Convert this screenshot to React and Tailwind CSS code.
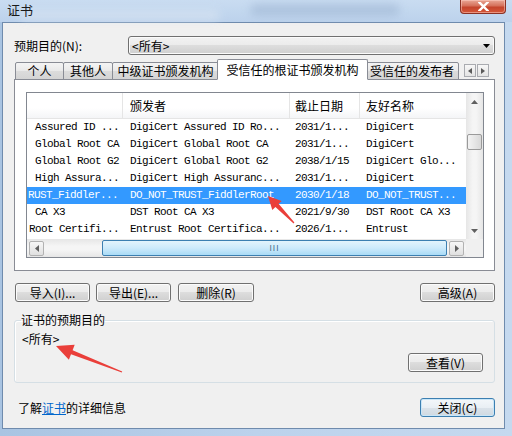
import React from "react"

const rows = [
  { c1: "Assured ID ...", pad: "pl-[8px]", c2: "DigiCert Assured ID Ro...", c3: "2031/1...", c4: "DigiCert" },
  { c1: "Global Root CA", pad: "pl-[8px]", c2: "DigiCert Global Root CA", c3: "2031/1...", c4: "DigiCert" },
  { c1: "Global Root G2", pad: "pl-[8px]", c2: "DigiCert Global Root G2", c3: "2038/1/15", c4: "DigiCert Glo..." },
  { c1: "High Assura...", pad: "pl-[8px]", c2: "DigiCert High Assuranc...", c3: "2031/1...", c4: "DigiCert" },
  { c1: "RUST_Fiddler...", pad: "pl-[1px]", c2: "DO_NOT_TRUST_FiddlerRoot", c3: "2030/1/18", c4: "DO_NOT_TRUST...", sel: true },
  { c1: "CA X3", pad: "pl-[8px]", c2: "DST Root CA X3", c3: "2021/9/30", c4: "DST Root CA X3" },
  { c1: "Root Certifi...", pad: "pl-[2px]", c2: "Entrust Root Certifica...", c3: "2026/1...", c4: "Entrust" },
]

// tapered arrow from tail to tip
function arrowPoints(x1, y1, x2, y2, head, hw) {
  const dx = x2 - x1
  const dy = y2 - y1
  const len = Math.hypot(dx, dy)
  const ux = dx / len
  const uy = dy / len
  const nx = -uy
  const ny = ux
  const bx = x2 - ux * head
  const by = y2 - uy * head
  const pts = [
    [x1 + nx * 0.6, y1 + ny * 0.6],
    [bx + nx * 2.2, by + ny * 2.2],
    [bx + nx * hw, by + ny * hw],
    [x2, y2],
    [bx - nx * hw, by - ny * hw],
    [bx - nx * 2.2, by - ny * 2.2],
    [x1 - nx * 0.6, y1 - ny * 0.6],
  ]
  return pts.map((p) => p.map((v) => v.toFixed(1)).join(",")).join(" ")
}

function Btn({ children, focus, className = "" }) {
  return (
    <div
      className={`h-[19px] w-[75px] flex items-center justify-center rounded-[3px] border text-[12px] leading-none ${
        focus
          ? "border-[#3c7fb1] bg-[linear-gradient(#f3f7fa,#e9eff4_50%,#dbe3ea_50%,#d0d9e1)] shadow-[inset_0_0_0_1px_#c9e6f8]"
          : "border-[#707070] bg-[linear-gradient(#f2f2f2,#ebebeb_50%,#dddddd_50%,#cfcfcf)] shadow-[inset_0_0_0_1px_#fbfbfb]"
      } ${className}`}
    >
      {children}
    </div>
  )
}

function Tab({ children, w, active }) {
  return (
    <div
      className={`${w} shrink-0 flex items-center justify-center border border-[#898c95] text-[12px] leading-none whitespace-nowrap ${
        active
          ? "h-[21px] -mx-[2px] z-10 border-b-white bg-white rounded-t-[2px]"
          : "h-[18px] -ml-px first:ml-0 bg-[linear-gradient(#f4f4f4,#e9e9e9_50%,#dcdcdc_50%,#d4d4d4)] rounded-t-[2px]"
      }`}
    >
      {children}
    </div>
  )
}

function SmallArrow({ dir }) {
  return (
    <div className="w-[12px] h-[13px] border border-[#a9abb0] bg-[linear-gradient(#f7f7f7,#e4e4e4)] flex items-center justify-center">
      <svg width="4" height="6" viewBox="0 0 4 6">
        {dir === "l" ? <polygon points="4,0 0,3 4,6" fill="#5a5a5a" /> : <polygon points="0,0 4,3 0,6" fill="#5a5a5a" />}
      </svg>
    </div>
  )
}

export default function App() {
  const mono = "font-['Liberation_Mono',monospace] text-[11px] tracking-[-0.6px]"
  return (
    <div className="relative w-[512px] h-[436px] overflow-hidden bg-[linear-gradient(90deg,#a9c4e2,#bcd2ec_50%,#c5d9ef)] font-['Noto_Sans_CJK_SC',sans-serif] text-[12px] text-black">
      {/* title bar */}
      <div className="relative h-[22px] bg-[linear-gradient(#c9dcf1,#bcd2ec)]">
        <div className="absolute left-[250px] top-[4px] w-[150px] h-[12px] rounded-full bg-[#9fb6d3] opacity-60 blur-[4px]" />
        <div className="absolute left-[20px] top-[10px] w-[200px] h-[10px] rounded-full bg-[#d5e2f1] opacity-80 blur-[4px]" />
        <span className="absolute left-[7px] top-[0px] text-[13px] leading-[20px] text-[#1a1a1a]">证书</span>
        <div className="absolute left-[460px] top-0 w-[46px] h-[14px] rounded-b-[4px] border border-t-0 border-[#8b3225] bg-[linear-gradient(#e9a796,#d5705a_45%,#c4442c_55%,#d5583a)] flex items-center justify-center shadow-[inset_0_0_0_1px_rgba(255,210,200,0.5)]">
          <svg width="11" height="9" viewBox="0 0 11 9">
            <path d="M1.5 0.5 L9.5 8.5 M9.5 0.5 L1.5 8.5" stroke="#ffffff" strokeWidth="2.4" strokeLinecap="square" />
          </svg>
        </div>
      </div>

      {/* client */}
      <div className="ml-[2px] w-[503px] h-[407px] border border-[#6f8bad] bg-[#f0f0f0] pl-[11px] pr-[9px] flex flex-col">
        {/* purpose */}
        <div className="mt-[13px] h-[19px] flex items-center">
          <span className="w-[114px] text-[12px]">预期目的(N):</span>
          <div className="flex-1 h-[19px] rounded-[3px] border border-[#707070] bg-[linear-gradient(#f2f2f2,#ebebeb_50%,#dddddd_50%,#cfcfcf)] shadow-[inset_0_0_0_1px_#fbfbfb] flex items-center pl-[3px] pr-[4px]">
            <span className="flex-1">&lt;所有&gt;</span>
            <svg width="7" height="4" viewBox="0 0 7 4">
              <polygon points="0,0 7,0 3.5,4" fill="#000" />
            </svg>
          </div>
        </div>

        {/* tabs */}
        <div className="mt-[5px] h-[20px] flex items-end pl-px relative z-10 -mb-px">
          <Tab w="w-[49px]">个人</Tab>
          <Tab w="w-[50px]">其他人</Tab>
          <Tab w="w-[107px]">中级证书颁发机构</Tab>
          <Tab w="w-[151px]" active>受信任的根证书颁发机构</Tab>
          <Tab w="w-[94px]">受信任的发布者</Tab>
          <div className="ml-auto mr-[6px] mb-[3px] flex gap-[1px]">
            <SmallArrow dir="l" />
            <SmallArrow dir="r" />
          </div>
        </div>

        {/* tab panel */}
        <div className="h-[192px] border border-[#898c95] bg-white pl-[11px] pr-[10px] pt-[12px]">
          <div className="w-[458px] h-[166px] border border-[#828790] flex flex-col">
            <div className="flex h-[146px]">
              <div className="flex-1 flex flex-col overflow-hidden">
                {/* header */}
                <div className="h-[26px] shrink-0 flex bg-[linear-gradient(#ffffff,#ffffff_60%,#f4f5f7)] border-b border-[#e5e5e5]">
                  <div className="w-[96px] border-r border-[#e5e5e5]" />
                  <div className="w-[167px] border-r border-[#e5e5e5] pl-[7px] flex items-center">颁发者</div>
                  <div className="w-[70px] border-r border-[#e5e5e5] pl-[5px] flex items-center">截止日期</div>
                  <div className="flex-1 pl-[6px] flex items-center">友好名称</div>
                </div>
                {rows.map((r) => (
                  <div
                    key={r.c2}
                    className={`h-[17px] shrink-0 flex items-center whitespace-nowrap ${mono} ${r.sel ? "bg-[#3399ff] text-white" : ""}`}
                  >
                    <div className={`w-[96px] overflow-hidden ${r.pad}`}>{r.c1}</div>
                    <div className="w-[167px] overflow-hidden pl-[7px]">{r.c2}</div>
                    <div className="w-[70px] overflow-hidden pl-[5px]">{r.c3}</div>
                    <div className="flex-1 overflow-hidden pl-[6px]">{r.c4}</div>
                  </div>
                ))}
              </div>
              {/* vertical scrollbar */}
              <div className="w-[17px] flex flex-col bg-[linear-gradient(90deg,#e6e6e6,#f5f5f5_40%,#f5f5f5_60%,#e6e6e6)]">
                <div className="h-[17px] flex items-center justify-center">
                  <svg width="7" height="4" viewBox="0 0 7 4">
                    <polygon points="0,4 7,4 3.5,0" fill="#606060" />
                  </svg>
                </div>
                <div className="mt-[24px] mx-[1px] h-[16px] rounded-[2px] border border-[#9a9a9a] bg-[linear-gradient(90deg,#f3f3f3,#e6e6e6_50%,#d8d8d8)]" />
                <div className="flex-1" />
                <div className="h-[17px] flex items-center justify-center">
                  <svg width="7" height="4" viewBox="0 0 7 4">
                    <polygon points="0,0 7,0 3.5,4" fill="#606060" />
                  </svg>
                </div>
              </div>
            </div>
            {/* horizontal scrollbar */}
            <div className="h-[18px] flex bg-[linear-gradient(#e6e6e6,#f5f5f5_40%,#f5f5f5_60%,#e6e6e6)]">
              <div className="w-[439px] flex items-center">
                <div className="ml-[2px] w-[15px] h-[15px] rounded-[2px] border border-[#b2b2b2] bg-[linear-gradient(#f7f7f7,#e0e0e0)] flex items-center justify-center">
                  <svg width="4" height="7" viewBox="0 0 4 7">
                    <polygon points="4,0 0,3.5 4,7" fill="#606060" />
                  </svg>
                </div>
                <div className="ml-[58px] w-[345px] h-[16px] rounded-[2px] border border-[#3c7fb1] bg-[linear-gradient(#e3f4fc,#cdeafb_50%,#a9dbf6)] flex items-center justify-center">
                  <span className="text-[8px] leading-none tracking-[1px] text-[#3b5f80]">III</span>
                </div>
                <div className="ml-[2px] w-[15px] h-[15px] rounded-[2px] border border-[#b2b2b2] bg-[linear-gradient(#f7f7f7,#e0e0e0)] flex items-center justify-center">
                  <svg width="4" height="7" viewBox="0 0 4 7">
                    <polygon points="0,0 4,3.5 0,7" fill="#606060" />
                  </svg>
                </div>
              </div>
              <div className="flex-1 bg-[#f0f0f0]" />
            </div>
          </div>
        </div>

        {/* buttons */}
        <div className="mt-[12px] flex items-center pl-px">
          <Btn>导入(I)...</Btn>
          <Btn className="ml-[6px]">导出(E)...</Btn>
          <Btn className="ml-[7px] w-[76px]">删除(R)</Btn>
          <div className="flex-1" />
          <Btn>高级(A)</Btn>
        </div>

        {/* group box */}
        <fieldset className="mt-[11px] h-[70px] border border-[#d5dfe5] rounded-[3px] px-[7px] shadow-[inset_1px_1px_0_#ffffff]">
          <legend className="ml-[-1px] px-0 text-[12px] leading-[14px]">证书的预期目的</legend>
          <div className="mt-[5px] leading-[14px]">&lt;所有&gt;</div>
          <div className="mt-[7px] flex justify-end pr-[4px]">
            <Btn>查看(V)</Btn>
          </div>
        </fieldset>

        {/* bottom */}
        <div className="mt-[15px] flex items-center pl-[4px]">
          <span>
            了解<span className="text-[#0066cc] underline">证书</span>的详细信息
          </span>
          <div className="flex-1" />
          <Btn focus>关闭(C)</Btn>
        </div>
      </div>

      {/* red annotation arrows */}
      <svg className="absolute left-0 top-0 pointer-events-none" width="512" height="436" viewBox="0 0 512 436">
        <polygon points={arrowPoints(294, 223, 268, 196, 13, 6.5)} fill="#ea3f3a" />
        <polygon points={arrowPoints(122, 372, 56, 346, 17, 8)} fill="#ea3f3a" />
      </svg>
    </div>
  )
}
